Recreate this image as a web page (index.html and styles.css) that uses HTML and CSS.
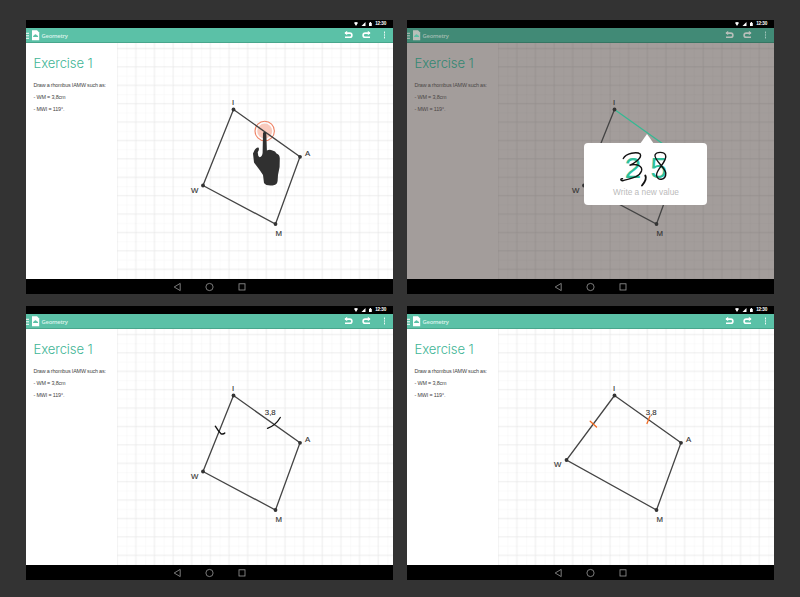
FILE: index.html
```html
<!DOCTYPE html>
<html lang="en">
<head>
<meta charset="utf-8">
<title>Geometry</title>
<link rel="stylesheet" href="styles.css">
</head>
<body>
<svg class="defs" width="0" height="0" aria-hidden="true">
  <defs>
    <pattern id="minor" x="117" y="48" width="9.32" height="9.2" patternUnits="userSpaceOnUse"><path d="M.5 0V9.2M0 .5H9.32" class="minor"/></pattern>
    <pattern id="major" x="116" y="47.7" width="18.65" height="18.4" patternUnits="userSpaceOnUse"><path d="M1 0V18.4M0 .7H18.65" class="major"/></pattern>
    <g id="grid"><rect x="117" y="43" width="276" height="236" fill="url(#minor)"/><rect x="117" y="43" width="276" height="236" fill="url(#major)"/></g>
    <g id="shape">
      <path class="edge" d="M233.5 109.5 300 156.8 275.5 224 203 185.5Z"/>
      <circle cx="233.5" cy="109.5" r="1.9"/><circle cx="300" cy="156.8" r="1.9"/><circle cx="275.5" cy="224" r="1.9"/><circle cx="203" cy="185.5" r="1.9"/>
    </g>
    <symbol id="status" viewBox="0 0 36 8"><path d="M1 2.7Q3 1.2 5 2.7L3 6ZM12.5 2V6H8.5ZM16 3h.7V2h1.4v1h.7v3H16Z" fill="#fff"/></symbol>
    <symbol id="menu" viewBox="0 0 14 14"><path d="M0 5.300H3M0 7.800H3M0 10.300H3" stroke="currentColor" fill="none"/><path d="M6 2.300h5l2.200 2.200v7.800H6Z" fill="currentColor"/><path class="cloud" d="M7 9Q7 7.300 8.200 7.200 9.500 5.500 10.800 7.200 12.200 7.300 12.200 9Z"/></symbol>
    <symbol id="undo" viewBox="0 0 10 10"><path d="M2 3.100H6.800A2.100 2.100 0 0 1 6.800 7.300H2" fill="none" stroke="currentColor" stroke-width="1.600"/><path d="M4.200 .8V5.200L1.400 3Z" fill="currentColor"/></symbol>
    <symbol id="nav" viewBox="0 0 72 10"><path d="M7.2 1.4V8.6L1.2 5Z"/><circle cx="36.5" cy="5" r="3.6"/><rect x="66" y="1.8" width="6" height="6.2"/></symbol>
  </defs>
</svg>
<main class="screens">

<section class="tablet">
  <div class="status"><svg class="signals"><use href="#status"/></svg><span>12:30</span></div>
  <header class="bar"><svg class="menu"><use href="#menu"/></svg><span class="name">Geometry</span><svg class="undo"><use href="#undo"/></svg><svg class="undo redo"><use href="#undo"/></svg><i class="more"></i></header>
  <div class="content">
    <aside><h1>Exercise 1</h1><p class="p1">Draw a rhombus IAMW such as:</p><p class="p2">- WM = 3,8cm</p><p class="p3">- MWI = 119°.</p></aside>
    <svg class="board" viewBox="117 43 276 236">
      <use href="#grid"/>
      <circle cx="264.7" cy="131" r="9.7" fill="none" stroke="#ef8466" stroke-width="1.1"/><circle cx="264.7" cy="131" r="7.5" fill="#f9cabd"/>
      <use href="#shape"/>
      <text x="232" y="105">I</text><text x="305" y="155.500">A</text><text x="191" y="192.500">W</text><text x="275.500" y="236">M</text>
      <path class="hand" d="M263 133Q264.600 130.500 266.300 133L266.900 150.500Q269.500 149 272.500 150.500 275.500 151 276.500 153.500 279.800 154.500 279.800 158.500L279.600 167 278 175 277.600 181Q277 185.400 272.500 185.400 266 186 264 183L263 175 260 170.500 254 162.500 253 153.500Q255.500 147 258.400 147.500 259.800 149 257.800 152 257.600 156 259.700 157.200 262 157 262.600 153Z"/>
    </svg>
  </div>
  <footer><svg><use href="#nav"/></svg></footer>
</section>

<section class="tablet dimmed">
  <div class="status"><svg class="signals"><use href="#status"/></svg><span>12:30</span></div>
  <header class="bar"><svg class="menu"><use href="#menu"/></svg><span class="name">Geometry</span><svg class="undo"><use href="#undo"/></svg><svg class="undo redo"><use href="#undo"/></svg><i class="more"></i></header>
  <div class="content">
    <aside><h1>Exercise 1</h1><p class="p1">Draw a rhombus IAMW such as:</p><p class="p2">- WM = 3,8cm</p><p class="p3">- MWI = 119°.</p></aside>
    <svg class="board" viewBox="117 43 276 236">
      <use href="#grid"/>
      <path class="edge" d="M300 156.800 275.500 224 203 185.500 233.500 109.500"/>
      <path d="M233.500 109.500 300 156.800" stroke="#35b993" stroke-width="1.300"/>
      <circle cx="233.500" cy="109.500" r="1.900"/><circle cx="275.500" cy="224" r="1.900"/><circle cx="203" cy="185.500" r="1.900"/>
      <text x="232" y="105">I</text><text x="191" y="192.500">W</text><text x="275.500" y="236">M</text>
    </svg>
    <div class="popup">
      <span class="old">25</span>
      <svg class="ink" viewBox="584 143 122 61"><path d="M623.300 158.500C626 153 637 151.500 640.200 154 642.500 158 634 163.500 629.500 165.300 636 163 643 166 641.500 171 639 178 629 178.500 622.500 180.800 620 180.500 620.500 178.500 622.500 178.800"/><path d="M665.500 155C664 151.500 656.500 151.500 655 155 654 160 665 167.500 665.800 173 666 180.500 657 181.500 656.500 175 656.500 169 668 161 665.500 155"/><path class="comma" d="M645.300 175.500C647 178.500 644.500 182.500 642 185.500"/></svg>
      <span class="hint">Write a new value</span>
    </div>
  </div>
  <footer><svg><use href="#nav"/></svg></footer>
</section>

<section class="tablet">
  <div class="status"><svg class="signals"><use href="#status"/></svg><span>12:30</span></div>
  <header class="bar"><svg class="menu"><use href="#menu"/></svg><span class="name">Geometry</span><svg class="undo"><use href="#undo"/></svg><svg class="undo redo"><use href="#undo"/></svg><i class="more"></i></header>
  <div class="content">
    <aside><h1>Exercise 1</h1><p class="p1">Draw a rhombus IAMW such as:</p><p class="p2">- WM = 3,8cm</p><p class="p3">- MWI = 119°.</p></aside>
    <svg class="board" viewBox="117 43 276 236">
      <use href="#grid"/><use href="#shape"/>
      <text x="232" y="105">I</text><text x="305" y="155.500">A</text><text x="191" y="192.500">W</text><text x="275.500" y="236">M</text><text x="264.800" y="128.500">3,8</text>
      <path class="tick" d="M215.300 140.200Q218.500 145.500 221 147.800 223.500 148.500 224.800 147M267.500 142.300Q275.500 139.500 280.300 131.500"/>
    </svg>
  </div>
  <footer><svg><use href="#nav"/></svg></footer>
</section>

<section class="tablet">
  <div class="status"><svg class="signals"><use href="#status"/></svg><span>12:30</span></div>
  <header class="bar"><svg class="menu"><use href="#menu"/></svg><span class="name">Geometry</span><svg class="undo"><use href="#undo"/></svg><svg class="undo redo"><use href="#undo"/></svg><i class="more"></i></header>
  <div class="content">
    <aside><h1>Exercise 1</h1><p class="p1">Draw a rhombus IAMW such as:</p><p class="p2">- WM = 3,8cm</p><p class="p3">- MWI = 119°.</p></aside>
    <svg class="board" viewBox="117 43 276 236">
      <use href="#grid"/>
      <path class="edge" d="M233.500 109.500 300 156.800 275.500 224 185.500 174Z"/>
      <circle cx="233.500" cy="109.500" r="1.900"/><circle cx="300" cy="156.800" r="1.900"/><circle cx="275.500" cy="224" r="1.900"/><circle cx="185.500" cy="174" r="1.900"/>
      <path class="tick orange" d="M209.200 135.200 215.500 141M269 130 266 137.500"/>
      <text x="232" y="105">I</text><text x="305" y="155.500">A</text><text x="173" y="181">W</text><text x="275.500" y="236">M</text><text x="264.800" y="128.500">3,8</text>
    </svg>
  </div>
  <footer><svg><use href="#nav"/></svg></footer>
</section>

</main>
</body>
</html>
```

FILE: styles.css
```css
* { box-sizing: border-box; }
body { margin: 0; background: #333; font-family: "Liberation Sans", Arial, sans-serif; overflow: hidden; }
svg { display: block; flex: none; }
.defs { position: absolute; }
.screens { height: 597px; padding: 20px 26px 0; display: grid; grid-template-columns: 367px 367px; grid-template-rows: 274px 274px; gap: 12px 14px; }
.tablet { display: flex; flex-direction: column; overflow: hidden; background: #fff; }
.status { height: 8px; background: #000; color: #fff; display: flex; justify-content: flex-end; align-items: center; padding-right: 7px; font-size: 4.7px; font-weight: bold; line-height: 8px; }
.signals { width: 36px; height: 8px; margin-right: -14px; }
.status span { letter-spacing: -.25px; }
.bar { height: 15px; background: #5bc1a7; border-bottom: 1px solid #48a68c; color: #fff; display: flex; align-items: center; padding-right: 6px; }
.menu { width: 14px; height: 14px; }
.cloud { fill: #5bc1a7; }
.name { margin-left: 1.5px; padding-top: 1px; font: 5.8px/14px "Open Sans", sans-serif; font-weight: 600; letter-spacing: -.2px; flex: 1; color: #dcf3ec; }
.undo { width: 10px; height: 10px; margin-right: 9px; }
.redo { transform: scaleX(-1); margin-right: 8.5px; }
.more { width: 5px; height: 8px; margin-left: 2px; background: radial-gradient(circle, #fff 0 .7px, transparent 1px) 0 0 / 5px 2.66px; }
.content { height: 236px; display: flex; position: relative; }
aside { width: 91px; padding-left: 7.5px; color: #444; white-space: nowrap; }
h1 { margin: 11.5px 0 0; font: 300 13.1px/16px Inter, sans-serif; letter-spacing: -.1px; color: #3fb596; }
p { margin: 0; font-size: 5.4px; line-height: 12px; letter-spacing: -.15px; }
.p1 { padding-top: 8px; letter-spacing: -.18px; }
.board { width: 276px; height: 236px; fill: #333; font-size: 7.8px; }
.board text { stroke: #333; stroke-width: .12px; }
.minor { stroke: rgba(0, 0, 0, .02); stroke-width: .8; fill: none; }
.major { stroke: rgba(0, 0, 0, .05); stroke-width: 1; fill: none; }
.edge { fill: none; stroke: #444; stroke-width: 1.3; }
.hand { fill: #303030; }
.tick { fill: none; stroke: #111; stroke-width: 1.3; stroke-linecap: round; }
.orange { stroke: #f26a21; }
footer { height: 15px; background: #000; padding: 2.5px 0 0 146px; }
footer svg { width: 74px; height: 10px; fill: none; stroke: #999; stroke-width: .8; }
.dimmed .bar { background: #418a76; border-color: #357562; color: #b8bfba; }
.dimmed .cloud { fill: #418a76; }
.dimmed .name { color: #a3bdb3; }
.dimmed .more { opacity: .55; }
.dimmed .content { background: #a39d9b; }
.dimmed aside { color: #4b4746; }
.dimmed h1 { color: #348873; }
.popup { position: absolute; left: 177px; top: 100px; width: 122.5px; height: 61.5px; border-radius: 4px; background: #fff; }
.popup::before { content: ""; position: absolute; left: 56px; top: -9.5px; border: 7.5px solid transparent; border-top: 0; border-bottom: 10px solid #fff; }
.old { position: absolute; left: 40.5px; top: 9.5px; font: 300 30px/30px "Liberation Sans", sans-serif; letter-spacing: 9px; color: #2fc09a; }
.ink { position: absolute; left: 0; top: 0; width: 122px; height: 61px; fill: none; stroke: #111; stroke-width: 1.4; stroke-linecap: round; }
.comma { stroke-width: 1.9; }
.hint { position: absolute; left: 0; width: 124px; text-align: center; top: 44px; font-size: 8.3px; line-height: 11px; color: #bbb; }
```
